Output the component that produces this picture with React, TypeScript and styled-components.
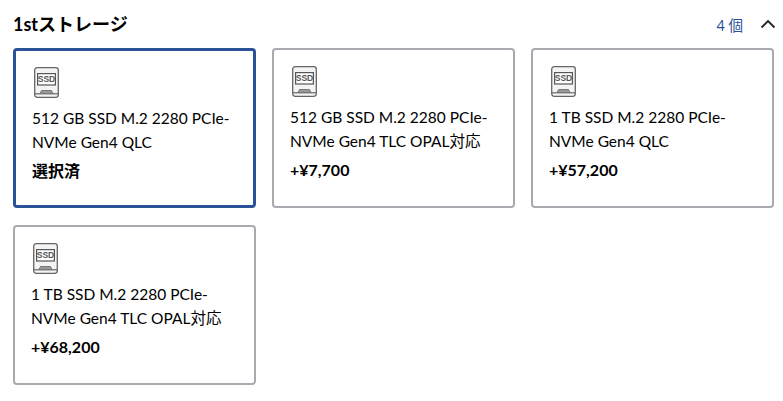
import styled, { createGlobalStyle } from 'styled-components';

const GlobalStyle = createGlobalStyle`
  html, body {
    margin: 0;
    padding: 0;
    background: #fff;
    font-family: Lato, "Noto Sans CJK JP", sans-serif;
    color: #000;
  }
`;

const Section = styled.section`
  width: 783px;
  height: 401px;
  box-sizing: border-box;
  padding: 13px 7px 0 13px;
`;

const Header = styled.div`
  display: flex;
  align-items: center;
  justify-content: space-between;
  height: 22px;
  margin-bottom: 13px;
`;

const Title = styled.h2`
  margin: 0;
  font-size: 18px;
  line-height: 22px;
  font-weight: 700;
`;

const HeaderRight = styled.div`
  display: flex;
  align-items: center;
  gap: 17px;
`;

const Count = styled.span`
  font-size: 14.5px;
  color: #2b5097;
`;

const Grid = styled.div`
  display: grid;
  grid-template-columns: repeat(3, 243px);
  grid-auto-rows: 160px;
  column-gap: 16px;
  row-gap: 17px;
`;

const Card = styled.div<{ $selected?: boolean }>`
  box-sizing: border-box;
  background: #fff;
  border-radius: 4px;
  border: ${p => (p.$selected ? '3px solid #2a5298' : '2px solid #a9a9b0')};
  padding: 16px;
`;

const IconWrap = styled.div`
  height: 30px;
  margin-bottom: 10px;
  padding-left: 2px;
  display: flex;
`;

const Name = styled.div`
  font-size: 15.5px;
  line-height: 23.5px;
  margin-bottom: 5px;
`;

const Price = styled.div`
  font-size: 16px;
  line-height: 24px;
  font-weight: 700;
`;

const SsdIcon = () => (
  <svg width="25" height="31" viewBox="0 0 25 31" fill="none">
    <rect x="0.7" y="0.7" width="23.6" height="29.6" rx="2.5" fill="#f4f4f4" stroke="#666" strokeWidth="1.3" />
    <rect x="3.6" y="6.6" width="17.8" height="11.4" fill="#fff" stroke="#555" strokeWidth="1.2" />
    <text x="12.5" y="15.4" textAnchor="middle" fontSize="8.5" fontWeight="700" fontFamily="Liberation Sans, sans-serif" fill="#555">SSD</text>
    <path d="M6 26.5 L7.5 23.5 H17.5 L19 26.5" fill="#999" stroke="#666" strokeWidth="0.8" />
    <path d="M1 26.8 H24" stroke="#666" strokeWidth="1.2" />
  </svg>
);

const Chevron = () => (
  <svg width="16" height="10" viewBox="0 0 16 10" fill="none">
    <path d="M1.5 8.5 L8 2 L14.5 8.5" stroke="#222" strokeWidth="1.8" />
  </svg>
);

const options = [
  { name: '512 GB SSD M.2 2280 PCIe-NVMe Gen4 QLC', price: '選択済', selected: true },
  { name: '512 GB SSD M.2 2280 PCIe-NVMe Gen4 TLC OPAL対応', price: '+¥7,700' },
  { name: '1 TB SSD M.2 2280 PCIe-NVMe Gen4 QLC', price: '+¥57,200' },
  { name: '1 TB SSD M.2 2280 PCIe-NVMe Gen4 TLC OPAL対応', price: '+¥68,200' },
];

export default function App() {
  return (
    <Section>
      <GlobalStyle />
      <Header>
        <Title>1stストレージ</Title>
        <HeaderRight>
          <Count>4 個</Count>
          <Chevron />
        </HeaderRight>
      </Header>
      <Grid>
        {options.map(o => (
          <Card key={o.name} $selected={o.selected}>
            <IconWrap>
              <SsdIcon />
            </IconWrap>
            <Name>{o.name}</Name>
            <Price>{o.price}</Price>
          </Card>
        ))}
      </Grid>
    </Section>
  );
}
